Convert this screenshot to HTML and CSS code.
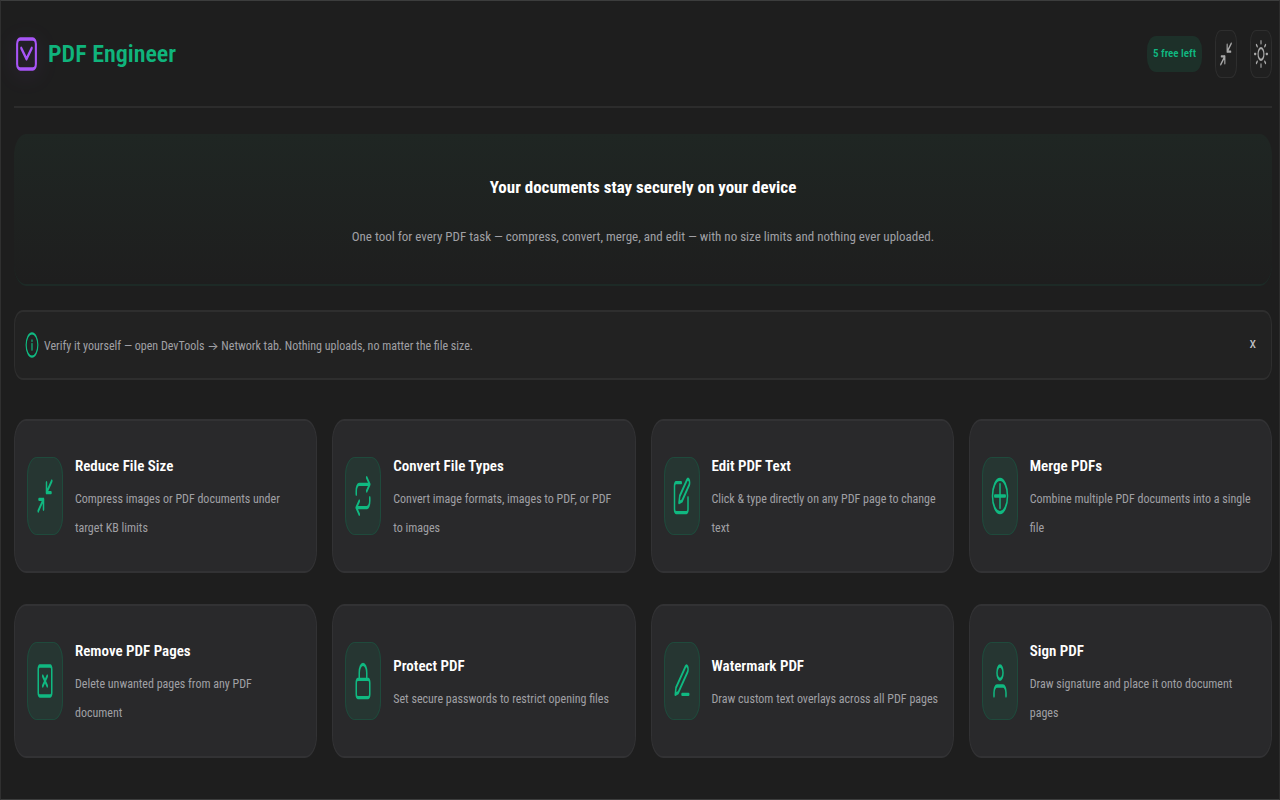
FILE: index.html
```
<!DOCTYPE html>
<html lang="en">
<head>
	<meta charset="utf-8">
	<meta name="viewport" content="width=device-width">
	<title>PDF Engineer</title>
	<link rel="stylesheet" href="styles.css">
</head>
<body>
	<header class="header">
		<div class="brand">
			<svg class="logo" viewBox="0 0 24 24" preserveAspectRatio="none"><rect x="3" y="3" width="18" height="18" rx="3"/><path d="M7 8.5l5 6.5 5-6.5"/></svg>
			<h1>PDF Engineer</h1>
		</div>
		<div class="actions">
			<span class="badge">5 free left</span>
			<button class="tool" type="button" aria-label="Compact view">
				<svg viewBox="0 0 24 24" preserveAspectRatio="none"><path d="M4 14h6v6M20 10h-6V4M14 10l7-7M3 21l7-7"/></svg>
			</button>
			<button class="tool" type="button" aria-label="Toggle theme">
				<svg viewBox="0 0 24 24" preserveAspectRatio="none"><circle cx="12" cy="12" r="5"/><path d="M12 1v2M12 21v2M4.2 4.2l1.4 1.4M18.4 18.4l1.4 1.4M1 12h2M21 12h2M4.2 19.8l1.4-1.4M18.4 5.6l1.4-1.4"/></svg>
			</button>
		</div>
	</header>
	<main>
		<section class="hero">
			<h2>Your documents stay securely on your device</h2>
			<p>One tool for every PDF task — compress, convert, merge, and edit — with no size limits and nothing ever uploaded.</p>
		</section>
		<section class="notice">
			<svg viewBox="0 0 24 24" preserveAspectRatio="none"><circle cx="12" cy="12" r="10"/><path d="M12 16v-5M12 8v.5"/></svg>
			<p>Verify it yourself — open DevTools → Network tab. Nothing uploads, no matter the file size.</p>
			<button class="close" type="button" aria-label="Dismiss">x</button>
		</section>
		<section class="cards">
			<a class="card" href="#reduce">
				<span class="icon"><svg viewBox="0 0 24 24" preserveAspectRatio="none"><path d="M4 14h6v6M20 10h-6V4M14 10l7-7M3 21l7-7"/></svg></span>
				<div class="text"><h3>Reduce File Size</h3><p>Compress images or PDF documents under target KB limits</p></div>
			</a>
			<a class="card" href="#convert">
				<span class="icon"><svg viewBox="0 0 24 24" preserveAspectRatio="none"><path d="M17 1l4 4-4 4M3 11V9a4 4 0 0 1 4-4h14M7 23l-4-4 4-4M21 13v2a4 4 0 0 1-4 4H3"/></svg></span>
				<div class="text"><h3>Convert File Types</h3><p>Convert image formats, images to PDF, or PDF to images</p></div>
			</a>
			<a class="card" href="#edit">
				<span class="icon"><svg viewBox="0 0 24 24" preserveAspectRatio="none"><path d="M11 4H4a2 2 0 0 0-2 2v14a2 2 0 0 0 2 2h14a2 2 0 0 0 2-2v-7"/><path d="M18.5 2.5a2.12 2.12 0 0 1 3 3L12 15l-4 1 1-4z"/></svg></span>
				<div class="text"><h3>Edit PDF Text</h3><p>Click &amp; type directly on any PDF page to change text</p></div>
			</a>
			<a class="card" href="#merge">
				<span class="icon"><svg viewBox="0 0 24 24" preserveAspectRatio="none"><circle cx="12" cy="12" r="10"/><path d="M12 5v14M5 12h14"/></svg></span>
				<div class="text"><h3>Merge PDFs</h3><p>Combine multiple PDF documents into a single file</p></div>
			</a>
			<a class="card" href="#remove">
				<span class="icon"><svg viewBox="0 0 24 24" preserveAspectRatio="none"><rect x="3" y="3" width="18" height="18" rx="2"/><path d="M9 9l6 6M15 9l-6 6"/></svg></span>
				<div class="text"><h3>Remove PDF Pages</h3><p>Delete unwanted pages from any PDF<br>document</p></div>
			</a>
			<a class="card" href="#protect">
				<span class="icon"><svg viewBox="0 0 24 24" preserveAspectRatio="none"><rect x="3" y="11" width="18" height="11" rx="2"/><path d="M7 11V7a5 5 0 0 1 10 0v4"/></svg></span>
				<div class="text"><h3>Protect PDF</h3><p>Set secure passwords to restrict opening files</p></div>
			</a>
			<a class="card" href="#watermark">
				<span class="icon"><svg viewBox="0 0 24 24" preserveAspectRatio="none"><path d="M12 20h9M16.5 3.5a2.12 2.12 0 0 1 3 3L7 19l-4 1 1-4z"/></svg></span>
				<div class="text"><h3>Watermark PDF</h3><p>Draw custom text overlays across all PDF pages</p></div>
			</a>
			<a class="card" href="#sign">
				<span class="icon"><svg viewBox="0 0 24 24" preserveAspectRatio="none"><path d="M20 21v-2a4 4 0 0 0-4-4H8a4 4 0 0 0-4 4v2"/><circle cx="12" cy="7" r="4"/></svg></span>
				<div class="text"><h3>Sign PDF</h3><p>Draw signature and place it onto document pages</p></div>
			</a>
		</section>
	</main>
</body>
</html>
```
FILE: styles.css
```
* {
	box-sizing: border-box;
}

body {
	margin: 0;
	min-height: 100vh;
	padding: 0 7px 0 13px;
	border: 1px solid #3c3d3d;
	border-right-color: #2c2c2c;
	border-left-color: #303030;
	background-color: #1e1e1e;
	color: #a0a0a5;
	font-family: "Roboto Condensed", "Liberation Sans Narrow", Inter, sans-serif;
	font-size: 12px;
}

h1, h2, h3, p {
	margin: 0;
}

svg {
	display: block;
	flex: none;
	fill: none;
	stroke: currentColor;
	stroke-width: 2;
	stroke-linecap: round;
	stroke-linejoin: round;
}

.header {
	display: flex;
	align-items: center;
	justify-content: space-between;
	height: 107px;
	border-bottom: 2px solid #2c2c2c;
}

.brand {
	display: flex;
	align-items: center;
	gap: 9px;
}

.logo {
	width: 25px;
	height: 40px;
	color: #a855f7;
	filter: drop-shadow(0 4px 10px #a855f733);
}

h1 {
	color: #10b47c;
	font-size: 24px;
	font-weight: 600;
}

.actions {
	display: flex;
	align-items: center;
	gap: 13px;
}

.badge {
	padding: 0 6px;
	border-radius: 9px / 14px;
	background-color: #1d3029;
	color: #10b981;
	font-size: 11px;
	font-weight: 600;
	line-height: 36px;
}

.tool {
	display: flex;
	align-items: center;
	justify-content: center;
	width: 22px;
	height: 48px;
	padding: 0;
	border: 1px solid #2e2e2e;
	border-radius: 6px / 12px;
	background-color: #202020;
	color: #a8a8a8;
}

.tool svg {
	width: 14px;
	height: 28px;
}

.hero {
	margin-top: 26px;
	padding: 34px 16px 32px;
	border-bottom: 2px solid #1d2a26;
	border-radius: 12px / 22px;
	background-image: linear-gradient(#1f2623, #1e1e1e);
	text-align: center;
}

h2 {
	color: #fff;
	font-size: 17px;
	font-weight: 700;
	line-height: 38px;
}

.hero p {
	margin-top: 16px;
	font-size: 13px;
	line-height: 30px;
}

.notice {
	display: flex;
	align-items: center;
	gap: 5px;
	height: 70px;
	margin-top: 24px;
	padding: 0 15px 0 10px;
	border: solid #2e2e2e;
	border-width: 2px 1px;
	border-radius: 9px / 14px;
	background-color: #222;
}

.notice svg {
	width: 14px;
	height: 28px;
	color: #10b981;
}

.close {
	margin-left: auto;
	padding: 0 0 4px;
	border: none;
	background: none;
	color: #c4c4c8;
	font: inherit;
	font-size: 15px;
}

.cards {
	display: grid;
	grid-template-columns: repeat(4, 1fr);
	gap: 31px 15px;
	margin-top: 39px;
	margin-bottom: 40px;
}

.card {
	display: flex;
	align-items: center;
	gap: 12px;
	min-height: 154px;
	padding: 0 12px;
	border: solid #323234;
	border-width: 2px 1px;
	border-radius: 12px / 22px;
	background-color: #29292b;
	color: inherit;
	text-decoration: none;
}

.icon {
	display: flex;
	flex: none;
	align-items: center;
	justify-content: center;
	width: 36px;
	height: 78px;
	border: 1px solid #1f4a3c;
	border-radius: 10px / 18px;
	background-color: #263632;
	color: #10b981;
}

.icon svg {
	width: 18px;
	height: 40px;
}

h3 {
	color: #fff;
	font-size: 15px;
	font-weight: 600;
	line-height: 34px;
}

.card p {
	margin-top: 2px;
	line-height: 29px;
}

.card:hover {
	border-color: #10b981;
}

@media (max-width: 900px) {
	.cards {
		grid-template-columns: repeat(2, 1fr);
	}
}
```
